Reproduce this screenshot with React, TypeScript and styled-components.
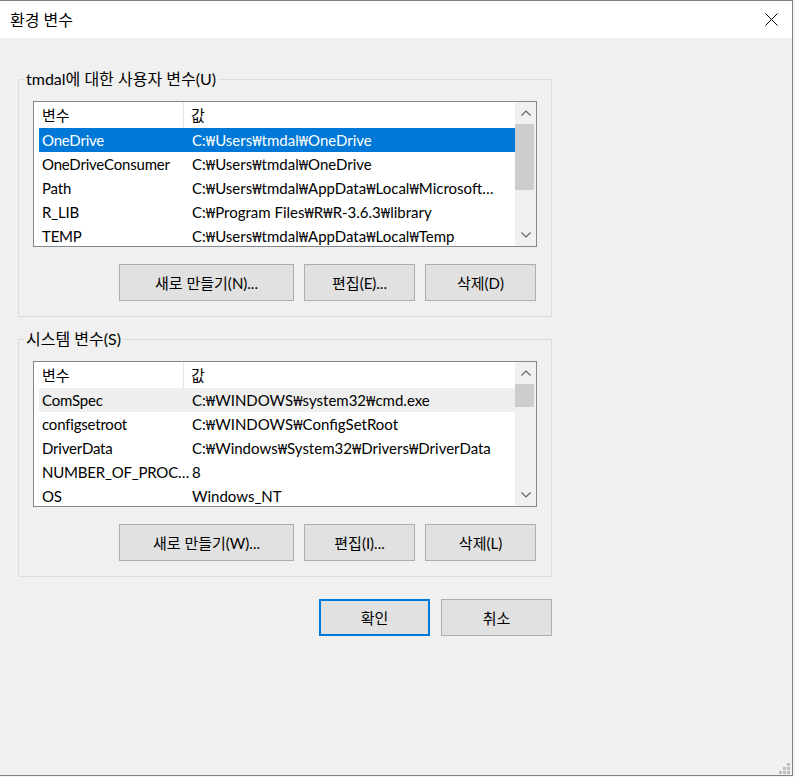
import { Fragment } from 'react'
import { createGlobalStyle } from 'styled-components'
import styled from 'styled-components'

const uiFont = `"Segoe UI", Lato, "Noto Sans CJK KR", sans-serif`

const GlobalStyle = createGlobalStyle`
  html, body {
    margin: 0;
    padding: 0;
    background: #f4f4f4;
  }
  body {
    font-family: ${uiFont};
    font-size: 15px;
    color: #000;
  }
`

interface EnvVar {
  name: string
  value: string
}

const userVars: EnvVar[] = [
  { name: 'OneDrive', value: 'C:₩Users₩tmdal₩OneDrive' },
  { name: 'OneDriveConsumer', value: 'C:₩Users₩tmdal₩OneDrive' },
  { name: 'Path', value: 'C:₩Users₩tmdal₩AppData₩Local₩Microsoft₩WindowsApps;' },
  { name: 'R_LIB', value: 'C:₩Program Files₩R₩R-3.6.3₩library' },
  { name: 'TEMP', value: 'C:₩Users₩tmdal₩AppData₩Local₩Temp' },
]

const systemVars: EnvVar[] = [
  { name: 'ComSpec', value: 'C:₩WINDOWS₩system32₩cmd.exe' },
  { name: 'configsetroot', value: 'C:₩WINDOWS₩ConfigSetRoot' },
  { name: 'DriverData', value: 'C:₩Windows₩System32₩Drivers₩DriverData' },
  { name: 'NUMBER_OF_PROCESSORS', value: '8' },
  { name: 'OS', value: 'Windows_NT' },
]

const Window = styled.div`
  position: relative;
  width: 793px;
  height: 776px;
  box-sizing: border-box;
  border-top: 1px solid #808080;
  border-right: 1px solid #808080;
  border-bottom: 1px solid #808080;
  background: #f0f0f0;
  display: flex;
  flex-direction: column;
`

const TitleBar = styled.div`
  height: 37px;
  flex-shrink: 0;
  background: #fff;
  display: flex;
  align-items: center;
  justify-content: space-between;
  padding: 0 14px 0 10px;
`

const Title = styled.span`
  font-size: 16px;
  line-height: 20px;
`

const Body = styled.div`
  padding: 32px 0 0 18px;
  display: flex;
  flex-direction: column;
  width: 534px;
`

const Group = styled.fieldset<{ $top: number }>`
  box-sizing: border-box;
  width: 534px;
  min-width: 0;
  margin: ${(p) => p.$top}px 0 0;
  border: 1px solid #dcdcdc;
  padding: 13px 14px 15px;
`

const Legend = styled.legend`
  padding: 0 2px;
  margin-left: -9px;
  font-size: 16px;
  line-height: 18px;
`

const GroupInner = styled.div`
  display: flex;
  flex-direction: column;
  gap: 17px;
`

const ListBox = styled.div`
  height: 146px;
  box-sizing: border-box;
  border: 1px solid #828790;
  background: #fff;
  display: flex;
`

const ListMain = styled.div`
  flex: 1;
  min-width: 0;
  display: flex;
  flex-direction: column;
  overflow: hidden;
`

const Header = styled.div`
  height: 26px;
  flex-shrink: 0;
  display: grid;
  grid-template-columns: 150px 1fr;
`

const HeaderCell = styled.div<{ $divider?: boolean }>`
  display: flex;
  align-items: center;
  padding-left: ${(p) => (p.$divider ? 8 : 7)}px;
  border-right: ${(p) => (p.$divider ? '1px solid #e5e5e5' : 'none')};
  line-height: 26px;
`

const Row = styled.div<{ $state?: 'selected' | 'inactive' }>`
  height: 24px;
  flex-shrink: 0;
  margin-left: 5px;
  display: grid;
  grid-template-columns: 152px 1fr;
  background: ${(p) =>
    p.$state === 'selected' ? '#0078d7' : p.$state === 'inactive' ? '#efefef' : 'transparent'};
  color: ${(p) => (p.$state === 'selected' ? '#fff' : '#000')};
`

const Cell = styled.div<{ $first?: boolean }>`
  line-height: 24px;
  white-space: nowrap;
  overflow: hidden;
  text-overflow: ellipsis;
  letter-spacing: ${(p) => (p.$first ? '-0.2px' : 'normal')};
  padding-left: ${(p) => (p.$first ? 3 : 1)}px;
  padding-right: ${(p) => (p.$first ? 0 : 14)}px;
`

const Won = styled.span`
  font-family: "Noto Sans", sans-serif;
  font-size: 14px;
`

const Scrollbar = styled.div`
  width: 21px;
  flex-shrink: 0;
  background: #f0f0f0;
  display: flex;
  flex-direction: column;
`

const ArrowButton = styled.div`
  height: 22px;
  flex-shrink: 0;
  display: flex;
  align-items: center;
  justify-content: center;
`

const Track = styled.div`
  flex: 1;
  display: flex;
  flex-direction: column;
`

const Thumb = styled.div<{ $height: number }>`
  height: ${(p) => p.$height}px;
  margin: 0 2px 0 0;
  background: #cdcdcd;
`

const ButtonRow = styled.div<{ $endInset?: number }>`
  display: flex;
  justify-content: flex-end;
  gap: 10px;
  padding-right: ${(p) => p.$endInset ?? 0}px;
`

const Button = styled.button<{ $width: number; $default?: boolean }>`
  width: ${(p) => p.$width}px;
  height: 37px;
  box-sizing: border-box;
  background: #e1e1e1;
  border: ${(p) => (p.$default ? '2px solid #0078d7' : '1px solid #adadad')};
  font-family: ${uiFont};
  font-size: 15px;
  color: #000;
  padding: 0;
  display: flex;
  align-items: center;
  justify-content: center;
`

const DialogButtons = styled.div`
  margin-top: 22px;
  display: flex;
  justify-content: flex-end;
  gap: 11px;
`

const Grip = styled.svg`
  position: absolute;
  right: 2px;
  bottom: 1px;
`

const Chevron = ({ up }: { up?: boolean }) => (
  <svg width='10' height='6' viewBox='0 0 10 6'>
    <polyline
      points={up ? '0.5,5.5 5,1 9.5,5.5' : '0.5,0.5 5,5 9.5,0.5'}
      fill='none'
      stroke='#606060'
      strokeWidth='1.1'
    />
  </svg>
)

// paths use the won sign as separator, as Korean Windows fonts draw the backslash
const PathText = ({ value }: { value: string }) => (
  <>
    {value.split('₩').map((part, i) => (
      <Fragment key={i}>
        {i > 0 && <Won>₩</Won>}
        {part}
      </Fragment>
    ))}
  </>
)

interface VarListProps {
  rows: EnvVar[]
  highlight: 'selected' | 'inactive'
  thumbHeight: number
}

const VarList = ({ rows, highlight, thumbHeight }: VarListProps) => (
  <ListBox>
    <ListMain>
      <Header>
        <HeaderCell $divider>변수</HeaderCell>
        <HeaderCell>값</HeaderCell>
      </Header>
      {rows.map((r, i) => (
        <Row key={r.name} $state={i === 0 ? highlight : undefined}>
          <Cell $first>{r.name}</Cell>
          <Cell>
            <PathText value={r.value} />
          </Cell>
        </Row>
      ))}
    </ListMain>
    <Scrollbar>
      <ArrowButton>
        <Chevron up />
      </ArrowButton>
      <Track>
        <Thumb $height={thumbHeight} />
      </Track>
      <ArrowButton>
        <Chevron />
      </ArrowButton>
    </Scrollbar>
  </ListBox>
)

export default function App() {
  return (
    <>
      <GlobalStyle />
      <Window>
        <TitleBar>
          <Title>환경 변수</Title>
          <svg width='13' height='13' viewBox='0 0 13 13'>
            <path d='M0.5 0.5 L12.5 12.5 M12.5 0.5 L0.5 12.5' stroke='#000' strokeWidth='1' />
          </svg>
        </TitleBar>
        <Body>
          <Group $top={0}>
            <Legend>tmdal에 대한 사용자 변수(U)</Legend>
            <GroupInner>
              <VarList rows={userVars} highlight='selected' thumbHeight={66} />
              <ButtonRow $endInset={1}>
                <Button $width={175}>새로 만들기(N)...</Button>
                <Button $width={111}>편집(E)...</Button>
                <Button $width={111}>삭제(D)</Button>
              </ButtonRow>
            </GroupInner>
          </Group>
          <Group $top={13}>
            <Legend>시스템 변수(S)</Legend>
            <GroupInner>
              <VarList rows={systemVars} highlight='inactive' thumbHeight={23} />
              <ButtonRow $endInset={1}>
                <Button $width={175}>새로 만들기(W)...</Button>
                <Button $width={111}>편집(I)...</Button>
                <Button $width={111}>삭제(L)</Button>
              </ButtonRow>
            </GroupInner>
          </Group>
          <DialogButtons>
            <Button $width={111} $default>
              확인
            </Button>
            <Button $width={111}>취소</Button>
          </DialogButtons>
        </Body>
        <Grip width='11' height='11' viewBox='0 0 11 11'>
          <rect x='8' y='0' width='3' height='3' fill='#bcbcbc' />
          <rect x='4' y='4' width='3' height='3' fill='#bcbcbc' />
          <rect x='8' y='4' width='3' height='3' fill='#bcbcbc' />
          <rect x='0' y='8' width='3' height='3' fill='#bcbcbc' />
          <rect x='4' y='8' width='3' height='3' fill='#bcbcbc' />
          <rect x='8' y='8' width='3' height='3' fill='#bcbcbc' />
        </Grip>
      </Window>
    </>
  )
}
